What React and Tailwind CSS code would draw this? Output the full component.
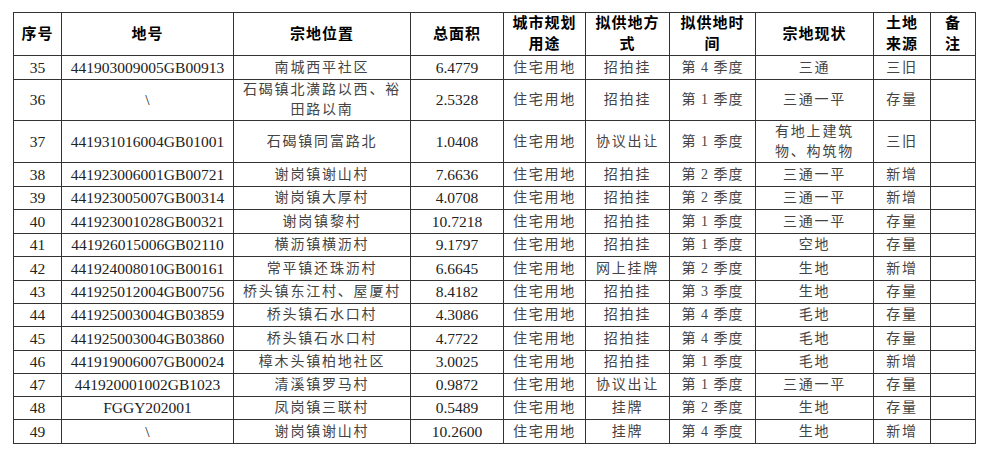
import React from 'react'

const rows = [
  ['35', '441903009005GB00913', '南城西平社区', '6.4779', '住宅用地', '招拍挂', '第 4 季度', '三通', '三旧', 'h-[24px]'],
  ['36', '\\', ['石碣镇北潢路以西、裕', '田路以南'], '2.5328', '住宅用地', '招拍挂', '第 1 季度', '三通一平', '存量', 'h-[41px]'],
  ['37', '441931016004GB01001', '石碣镇同富路北', '1.0408', '住宅用地', '协议出让', '第 1 季度', ['有地上建筑', '物、构筑物'], '三旧', 'h-[42px]'],
  ['38', '441923006001GB00721', '谢岗镇谢山村', '7.6636', '住宅用地', '招拍挂', '第 2 季度', '三通一平', '新增', 'h-[24px]'],
  ['39', '441923005007GB00314', '谢岗镇大厚村', '4.0708', '住宅用地', '招拍挂', '第 2 季度', '三通一平', '新增', 'h-[23px]'],
  ['40', '441923001028GB00321', '谢岗镇黎村', '10.7218', '住宅用地', '招拍挂', '第 1 季度', '三通一平', '存量', 'h-[24px]'],
  ['41', '441926015006GB02110', '横沥镇横沥村', '9.1797', '住宅用地', '招拍挂', '第 1 季度', '空地', '存量', 'h-[23px]'],
  ['42', '441924008010GB00161', '常平镇还珠沥村', '6.6645', '住宅用地', '网上挂牌', '第 2 季度', '生地', '新增', 'h-[24px]'],
  ['43', '441925012004GB00756', '桥头镇东江村、屋厦村', '8.4182', '住宅用地', '招拍挂', '第 3 季度', '生地', '存量', 'h-[23px]'],
  ['44', '441925003004GB03859', '桥头镇石水口村', '4.3086', '住宅用地', '招拍挂', '第 4 季度', '毛地', '存量', 'h-[23px]'],
  ['45', '441925003004GB03860', '桥头镇石水口村', '4.7722', '住宅用地', '招拍挂', '第 4 季度', '毛地', '存量', 'h-[24px]'],
  ['46', '441919006007GB00024', '樟木头镇柏地社区', '3.0025', '住宅用地', '招拍挂', '第 1 季度', '毛地', '新增', 'h-[23px]'],
  ['47', '441920001002GB1023', '清溪镇罗马村', '0.9872', '住宅用地', '协议出让', '第 1 季度', '三通一平', '存量', 'h-[23px]'],
  ['48', 'FGGY202001', '凤岗镇三联村', '0.5489', '住宅用地', '挂牌', '第 2 季度', '生地', '存量', 'h-[23px]'],
  ['49', '\\', '谢岗镇谢山村', '10.2600', '住宅用地', '挂牌', '第 4 季度', '生地', '新增', 'h-[24px]'],
]

const head = [
  ['序号'],
  ['地号'],
  ['宗地位置'],
  ['总面积'],
  ['城市规划', '用途'],
  ['拟供地方', '式'],
  ['拟供地时', '间'],
  ['宗地现状'],
  ['土地', '来源'],
  ['备', '注'],
]

const serif = "font-['Liberation_Serif','Noto_Sans_CJK_SC',serif]"

function Lines({ v }) {
  if (Array.isArray(v)) {
    return v.map((l, i) => <div key={i}>{l}</div>)
  }
  return v
}

export default function App() {
  return (
    <div className="w-[990px] h-[458px] bg-white pt-[12px] pl-[13px]">
      <table className={`table-fixed border-collapse ${serif}`}>
        <colgroup>
          <col className="w-[48px]" />
          <col className="w-[172px]" />
          <col className="w-[177px]" />
          <col className="w-[93px]" />
          <col className="w-[82px]" />
          <col className="w-[84px]" />
          <col className="w-[86px]" />
          <col className="w-[118px]" />
          <col className="w-[57px]" />
          <col className="w-[45px]" />
        </colgroup>
        <thead>
          <tr className="h-[41px]">
            {head.map((h, i) => (
              <th
                key={i}
                className="border border-[#333] p-0 text-center align-middle text-[15px] font-bold leading-[21px] tracking-[1px] text-black"
              >
                <Lines v={h} />
              </th>
            ))}
          </tr>
        </thead>
        <tbody>
          {rows.map((r) => (
            <tr key={r[0]} className={r[9]}>
              <td className="border border-[#333] p-0 text-center align-middle text-[15.5px] leading-[20px] text-[#222]">{r[0]}</td>
              <td className="border border-[#333] p-0 text-center align-middle text-[15.5px] leading-[20px] text-[#222]">{r[1]}</td>
              <td className="border border-[#333] p-0 text-center align-middle text-[14px] leading-[20px] tracking-[1.8px] text-[#444]"><Lines v={r[2]} /></td>
              <td className="border border-[#333] p-0 text-center align-middle text-[15.5px] leading-[20px] text-[#222]">{r[3]}</td>
              <td className="border border-[#333] p-0 text-center align-middle text-[14px] leading-[20px] tracking-[1.8px] text-[#444]">{r[4]}</td>
              <td className="border border-[#333] p-0 text-center align-middle text-[14px] leading-[20px] tracking-[1.8px] text-[#444]">{r[5]}</td>
              <td className="border border-[#333] p-0 text-center align-middle text-[14px] leading-[20px] tracking-[1px] text-[#444]">{r[6]}</td>
              <td className="border border-[#333] p-0 text-center align-middle text-[14px] leading-[20px] tracking-[1.8px] text-[#444]"><Lines v={r[7]} /></td>
              <td className="border border-[#333] p-0 text-center align-middle text-[14px] leading-[20px] tracking-[1.8px] text-[#444]">{r[8]}</td>
              <td className="border border-[#333] p-0"></td>
            </tr>
          ))}
        </tbody>
      </table>
    </div>
  )
}
